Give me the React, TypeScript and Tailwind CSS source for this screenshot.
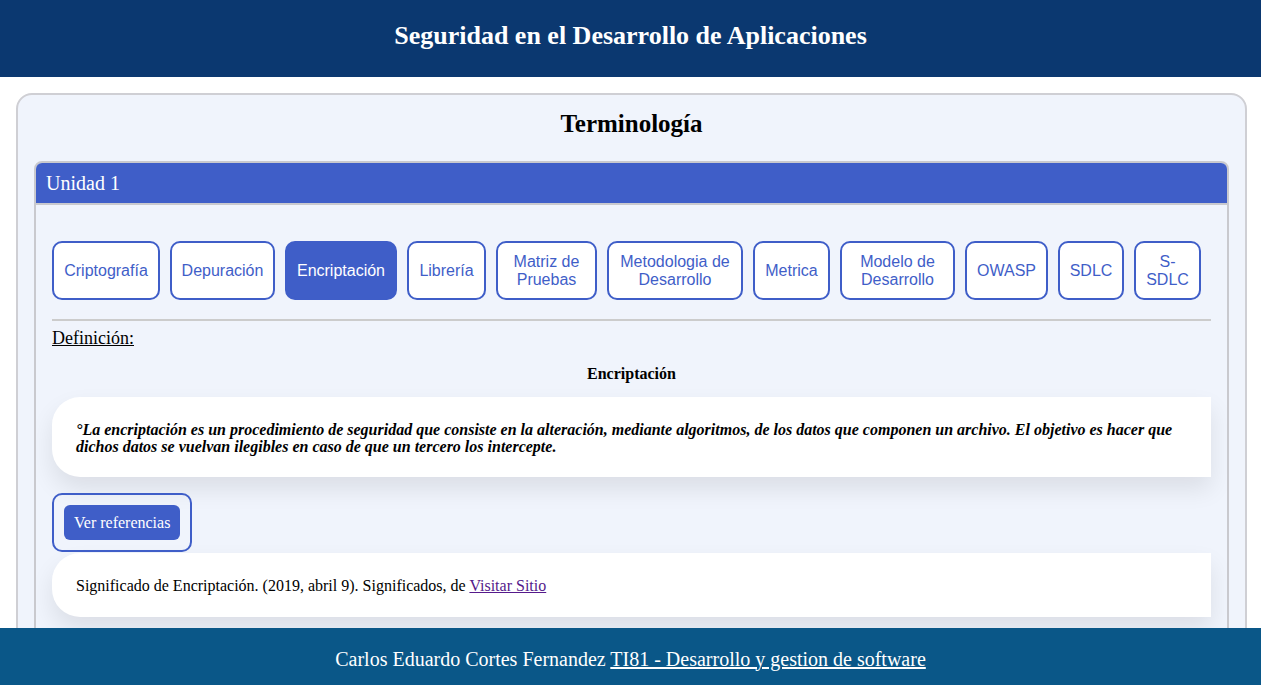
const TERMS = [
  { label: "Criptografía", w: "w-[108px]" },
  { label: "Depuración", w: "w-[105px]" },
  { label: "Encriptación", w: "w-[112px]", active: true },
  { label: "Librería", w: "w-[79px]" },
  { label: "Matriz de Pruebas", w: "w-[101px]" },
  { label: "Metodologia de Desarrollo", w: "w-[136px]" },
  { label: "Metrica", w: "w-[77px]" },
  { label: "Modelo de Desarrollo", w: "w-[115px]" },
  { label: "OWASP", w: "w-[83px]" },
  { label: "SDLC", w: "w-[66px]" },
  { label: "S-SDLC", w: "w-[67px]" },
];

export default function App() {
  return (
    <div className="min-h-screen bg-white font-['Liberation_Serif',serif] text-black">
      <header className="flex h-[77px] items-center justify-center bg-[#0b3870] pb-[6px]">
        <h1 className="text-[26px] font-bold text-white">Seguridad en el Desarrollo de Aplicaciones</h1>
      </header>

      <main className="pt-4 pr-[14px] pb-24 pl-4">
        <section className="rounded-2xl border-2 border-[#cfcfd4] bg-[#f0f4fc] px-4 pt-[12px] pb-10">
          <h2 className="text-center text-[25px] leading-[34px] font-bold">Terminología</h2>

          <div className="mt-[20px] overflow-hidden rounded-t-lg border-2 border-[#c9c9ce]">
            <div className="border-b-2 border-[#c9c9ce] bg-[#3f5ec8] px-[10px] py-[8px] text-[20px] leading-[24px] text-white">
              Unidad 1
            </div>

            <div className="px-4 pt-9 pb-10">
              <div className="flex gap-[10px]">
                {TERMS.map((t) => (
                  <button
                    key={t.label}
                    className={`${t.w} flex h-[59px] shrink-0 items-center justify-center rounded-[10px] border-2 border-[#3f5ec8] px-2 font-['Liberation_Sans',sans-serif] text-[16px] leading-[18px] ${
                      t.active ? "bg-[#3f5ec8] text-white" : "bg-white text-[#3f5ec8]"
                    }`}
                  >
                    {t.label}
                  </button>
                ))}
              </div>

              <hr className="mt-[19px] border-t-2 border-[#cccccc]" />

              <p className="mt-[7px] text-[18px] leading-[20px] underline">Definición:</p>

              <h3 className="mt-[17px] text-center text-[16px] leading-[18px] font-bold">Encriptación</h3>

              <div className="mt-[14px] rounded-l-[28px] bg-white px-6 pt-[24px] pb-[22px] shadow-[0_12px_24px_rgba(0,0,0,0.09)]">
                <p className="text-[16px] leading-[17px] font-bold italic">
                  °La encriptación es un procedimiento de seguridad que consiste en la alteración, mediante algoritmos, de los datos que componen un archivo. El objetivo es hacer que dichos datos se vuelvan ilegibles en caso de que un tercero los intercepte.
                </p>
              </div>

              <div className="mt-4 inline-block rounded-[10px] border-2 border-[#3f5ec8] p-[10px]">
                <button className="h-[35px] rounded-md bg-[#3f5ec8] px-[10px] text-[16px] text-white">Ver referencias</button>
              </div>

              <div className="mt-px rounded-l-[28px] bg-white px-6 pt-[23px] pb-[21px] shadow-[0_12px_24px_rgba(0,0,0,0.09)]">
                <p className="text-[16px] leading-[20px]">
                  Significado de Encriptación. (2019, abril 9). Significados, de{" "}
                  <a href="#" className="text-[#551a8b] underline">Visitar Sitio</a>
                </p>
              </div>
            </div>
          </div>
        </section>
      </main>

      <footer className="fixed inset-x-0 bottom-0 flex h-[57px] items-center justify-center bg-[#0a5788] pt-1 text-[20px] text-white">
        <p>
          Carlos Eduardo Cortes Fernandez{" "}
          <a href="#" className="underline">TI81 - Desarrollo y gestion de software</a>
        </p>
      </footer>
    </div>
  );
}
